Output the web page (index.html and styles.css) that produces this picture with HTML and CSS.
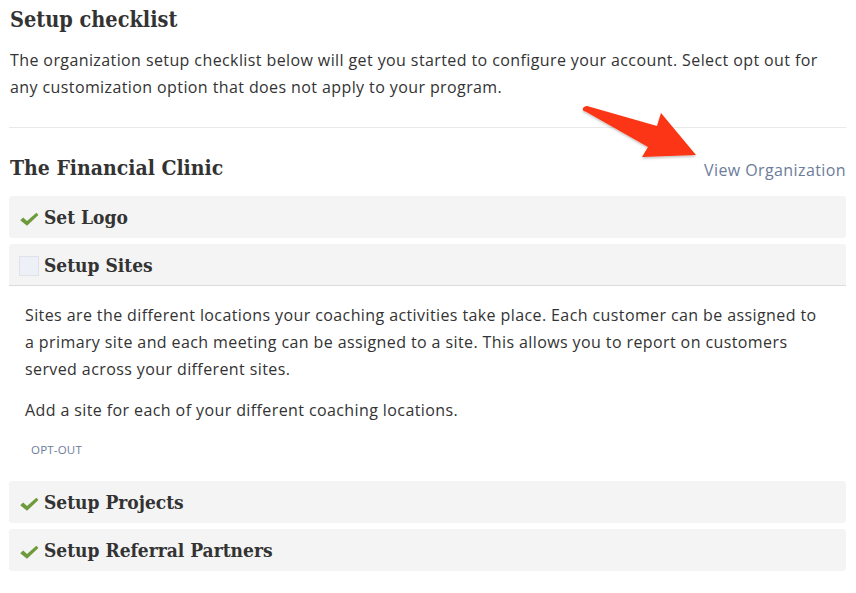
FILE: index.html
```html
<!DOCTYPE html>
<html>
<head>
<meta charset="utf-8">
<link rel="stylesheet" href="styles.css">
</head>
<body>
<div class="page">
  <h1 class="title">Setup checklist</h1>
  <p class="intro">The organization setup checklist below will get you started to configure your account. Select opt out for any customization option that does not apply to your program.</p>
  <hr class="divider">
  <div class="org-head">
    <h2 class="org-name">The Financial Clinic</h2>
    <a class="org-link" href="#">View Organization</a>
  </div>
  <div class="list">
    <div class="item">
      <div class="item-head">
        <svg class="check" viewBox="0 0 20 20" width="20" height="20"><path d="M1.2 11.2 L4.2 8.5 L8 12 L17.4 3.8 L19.4 6 L8 16.8 Z" fill="#6d9a3b"/></svg>
        <span class="item-title">Set Logo</span>
      </div>
    </div>
    <div class="item open">
      <div class="item-head">
        <span class="box"></span>
        <span class="item-title">Setup Sites</span>
      </div>
      <div class="item-body">
        <p>Sites are the different locations your coaching activities take place. Each customer can be assigned to a primary site and each meeting can be assigned to a site. This allows you to report on customers served across your different sites.</p>
        <p class="last">Add a site for each of your different coaching locations.</p>
        <a class="optout" href="#">OPT-OUT</a>
      </div>
    </div>
    <div class="item">
      <div class="item-head">
        <svg class="check" viewBox="0 0 20 20" width="20" height="20"><path d="M1.2 11.2 L4.2 8.5 L8 12 L17.4 3.8 L19.4 6 L8 16.8 Z" fill="#6d9a3b"/></svg>
        <span class="item-title">Setup Projects</span>
      </div>
    </div>
    <div class="item">
      <div class="item-head">
        <svg class="check" viewBox="0 0 20 20" width="20" height="20"><path d="M1.2 11.2 L4.2 8.5 L8 12 L17.4 3.8 L19.4 6 L8 16.8 Z" fill="#6d9a3b"/></svg>
        <span class="item-title">Setup Referral Partners</span>
      </div>
    </div>
  </div>
  <svg class="arrow" viewBox="0 0 130 70" width="130" height="70">
    <defs>
      <filter id="sh" x="-20%" y="-20%" width="140%" height="150%">
        <feDropShadow dx="0" dy="1.5" stdDeviation="1.2" flood-color="#000" flood-opacity="0.25"/>
      </filter>
    </defs>
    <path d="M10 11.5 C7 12.5 7 16 10.5 16.5 L73 52 L67 62 L121 60 L86 18 L82 31 L12 11 Z" fill="#fb3512" filter="url(#sh)"/>
  </svg>
</div>
</body>
</html>
```
FILE: styles.css
```css
* { box-sizing: border-box; }
html, body { margin: 0; padding: 0; background: #fff; }
body {
  font-family: "Open Sans", "Lato", sans-serif;
  color: #333;
}
.page {
  position: relative;
  padding: 5px 10px 0 9px;
  width: 856px;
}
.title {
  font-family: "DejaVu Serif Condensed", "DejaVu Serif", serif;
  font-stretch: condensed;
  font-weight: bold;
  font-size: 21.5px;
  line-height: 30px;
  margin: 0 0 0 1px;
  color: #333;
}
.intro {
  margin: 12px 0 0 1px;
  font-size: 16px;
  letter-spacing: 0.4px;
  line-height: 27px;
  color: #333;
}
.divider {
  border: 0;
  border-top: 1px solid #e9e9e9;
  margin: 26px 0 0 0;
}
.org-head {
  display: flex;
  justify-content: space-between;
  align-items: center;
  margin-top: 25px;
}
.org-name {
  font-family: "DejaVu Serif Condensed", "DejaVu Serif", serif;
  font-stretch: condensed;
  font-weight: bold;
  font-size: 21px;
  line-height: 30px;
  margin: 0 0 0 1px;
  color: #333;
}
.org-link {
  color: #6c7c99;
  text-decoration: none;
  font-size: 16px;
  letter-spacing: 0.4px;
  margin-top: 3px;
}
.list {
  display: flex;
  flex-direction: column;
  gap: 6px;
  margin-top: 13px;
}
.item-head {
  display: flex;
  align-items: center;
  height: 42px;
  background: #f4f4f4;
  border-radius: 3px;
  padding-left: 10px;
}
.open .item-head {
  border-bottom: 1px solid #dcdcdc;
  border-radius: 3px 3px 0 0;
}
.check { flex: none; margin-right: 5px; margin-top: 3px; }
.box {
  flex: none;
  width: 20px;
  height: 20px;
  background: #eef0f7;
  border: 1px solid #dfe2ea;
  margin-right: 5px;
  margin-top: 2px;
}
.item-title {
  font-family: "DejaVu Serif Condensed", "DejaVu Serif", serif;
  font-stretch: condensed;
  font-weight: bold;
  font-size: 19px;
  color: #333;
}
.item-body {
  padding: 16px 16px 13px 16px;
  font-size: 16px;
  letter-spacing: 0.4px;
  line-height: 27px;
}
.item-body p { margin: 0 0 14px 0; }
.item-body p.last { margin-bottom: 11px; }
.optout {
  display: inline-block;
  font-size: 11.5px;
  letter-spacing: 0.2px;
  color: #6c7c99;
  text-decoration: none;
  margin-left: 6px;
  line-height: 18px;
}
.arrow {
  position: absolute;
  left: 575px;
  top: 95px;
}
```
